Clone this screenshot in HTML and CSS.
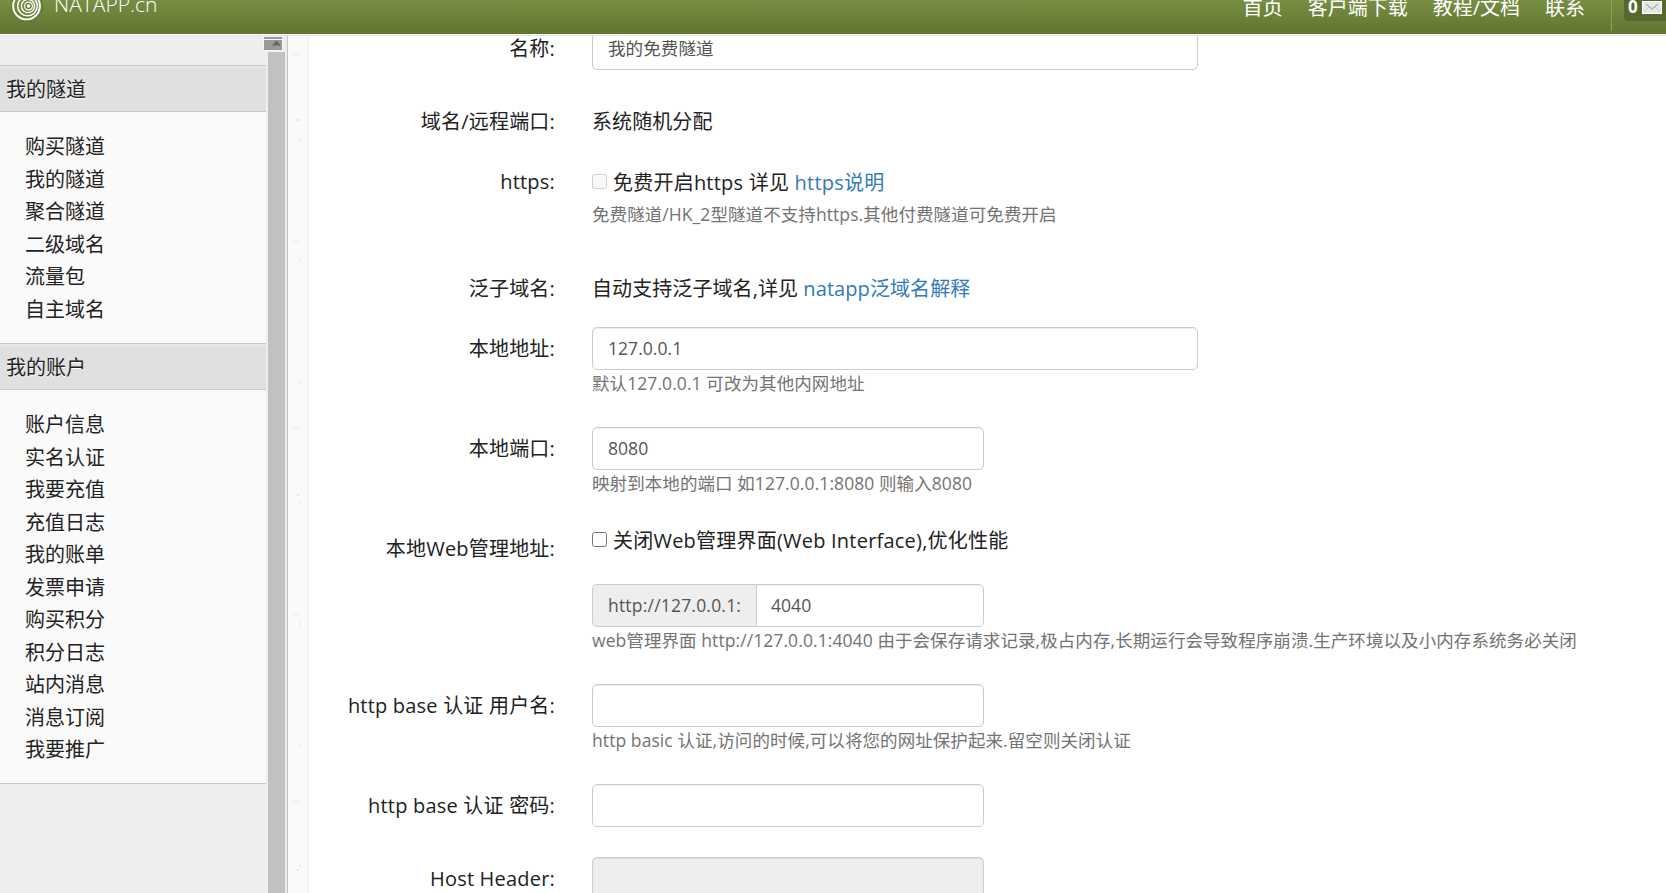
FILE: index.html
```
<!DOCTYPE html>
<html lang="zh-CN">
<head>
  <meta charset="UTF-8">
  <meta name="viewport" content="width=device-width, initial-scale=1">
  <title>NATAPP.cn</title>
  <link rel="stylesheet" href="styles.css">
</head>
<body>

  <header class="navbar">
    <div class="brand">
      <svg class="logo" width="34" height="34" viewBox="0 0 34 34" fill="none" stroke="#fff">
        <circle cx="17" cy="17" r="15.500" stroke="#5f7336" stroke-width="1"/>
        <circle cx="16.500" cy="17" r="13.400" stroke-width="1.900"/>
        <circle cx="17.500" cy="17" r="9.800" stroke-width="1.500"/>
        <circle cx="18" cy="17" r="6.600" stroke-width="1.400"/>
        <circle cx="18.500" cy="17" r="3.900" stroke-width="1.200"/>
        <circle cx="18.500" cy="17" r="1.700" fill="#fff" stroke="none"/>
      </svg>
      <span>NATAPP.cn</span>
    </div>
    <nav class="menu">
      <a href="#">首页</a>
      <a href="#">客户端下载</a>
      <a href="#">教程/文档</a>
      <a href="#">联系</a>
    </nav>
    <div class="messages">
      <div class="badge">
        <b>0</b>
        <svg width="20" height="13" viewBox="0 0 20 13">
          <rect x="0.5" y="0.5" width="19" height="12" fill="#e8e8e8" stroke="#fff"/>
          <path d="M2 11l5-5M18 11l-5-5" stroke="#d0d0d0" fill="none"/>
          <path d="M4 3l6 5 6-5" stroke="#b5b5b5" stroke-width="1.4" fill="none"/>
        </svg>
      </div>
    </div>
  </header>

  <div class="page">
    <aside class="sidebar">
      <div class="side-menu">
        <h3>我的隧道</h3>
        <ul>
          <li>购买隧道</li>
          <li>我的隧道</li>
          <li>聚合隧道</li>
          <li>二级域名</li>
          <li>流量包</li>
          <li>自主域名</li>
        </ul>
        <h3>我的账户</h3>
        <ul>
          <li>账户信息</li>
          <li>实名认证</li>
          <li>我要充值</li>
          <li>充值日志</li>
          <li>我的账单</li>
          <li>发票申请</li>
          <li>购买积分</li>
          <li>积分日志</li>
          <li>站内消息</li>
          <li>消息订阅</li>
          <li>我要推广</li>
        </ul>
      </div>
      <div class="scrollbar">
        <svg class="collapse" width="20" height="15" viewBox="0 0 20 15">
          <path d="M0 0h20v15H0z" fill="#f6f6f6"/>
          <path d="M1 1h18v2H1zM1 4h18v10H1z" fill="#999"/>
          <path d="M9 9.500l4.500-5 4.500 5z" fill="#666"/>
        </svg>
        <div class="thumb"></div>
      </div>
    </aside>

    <main class="content">
      <form>
        <div class="row">
          <label>名称:</label>
          <div class="field"><input class="control wide" type="text" value="我的免费隧道"></div>
        </div>
        <div class="row row-domain">
          <label>域名/远程端口:</label>
          <div class="field"><p class="static">系统随机分配</p></div>
        </div>
        <div class="row row-https">
          <label>https:</label>
          <div class="field">
            <div class="check"><input type="checkbox" disabled><span>免费开启https 详见 <a href="#">https说明</a></span></div>
            <p class="help">免费隧道/HK_2型隧道不支持https.其他付费隧道可免费开启</p>
          </div>
        </div>
        <div class="row row-sub">
          <label>泛子域名:</label>
          <div class="field"><p class="static">自动支持泛子域名,详见 <a href="#">natapp泛域名解释</a></p></div>
        </div>
        <div class="row">
          <label>本地地址:</label>
          <div class="field">
            <input class="control wide" type="text" value="127.0.0.1">
            <p class="help">默认127.0.0.1 可改为其他内网地址</p>
          </div>
        </div>
        <div class="row">
          <label>本地端口:</label>
          <div class="field">
            <input class="control" type="text" value="8080">
            <p class="help">映射到本地的端口 如127.0.0.1:8080 则输入8080</p>
          </div>
        </div>
        <div class="row">
          <label>本地Web管理地址:</label>
          <div class="field">
            <div class="check check-web"><input type="checkbox"><span>关闭Web管理界面(Web Interface),优化性能</span></div>
            <div class="input-group">
              <span class="addon">http://127.0.0.1:</span>
              <input class="control" type="text" value="4040">
            </div>
            <p class="help">web管理界面 http://127.0.0.1:4040 由于会保存请求记录,极占内存,长期运行会导致程序崩溃.生产环境以及小内存系统务必关闭</p>
          </div>
        </div>
        <div class="row">
          <label>http base 认证 用户名:</label>
          <div class="field">
            <input class="control" type="text">
            <p class="help">http basic 认证,访问的时候,可以将您的网址保护起来.留空则关闭认证</p>
          </div>
        </div>
        <div class="row">
          <label>http base 认证 密码:</label>
          <div class="field"><input class="control" type="text"></div>
        </div>
        <div class="row">
          <label>Host Header:</label>
          <div class="field"><input class="control" type="text" disabled></div>
        </div>
      </form>
    </main>
  </div>

</body>
</html>
```
FILE: styles.css
```
* {
  box-sizing: border-box;
}
body {
  margin: 0;
  height: 893px;
  overflow: hidden;
  display: flex;
  flex-direction: column;
  font-family: "Open Sans", "Noto Sans CJK SC", sans-serif;
  font-size: 20px;
  line-height: 25px;
  color: #222;
  background: #fff;
}
a {
  color: #337ab7;
  text-decoration: none;
}
p {
  margin: 0;
}
.navbar {
  display: flex;
  flex: none;
  height: 36px;
  background: linear-gradient(#778e43, #617430 34px, #fff 34px, #fff 35px, #e3e3e8 35px);
  color: #fff;
}
.brand {
  display: flex;
  flex: 1;
  padding-left: 10px;
}
.brand span {
  margin: -8px 0 0 10px;
  font-size: 21px;
  font-weight: 300;
}
.logo {
  margin-top: -11px;
}
.menu {
  display: flex;
  gap: 25px;
  padding-right: 26px;
  margin-top: -5px;
}
.menu a {
  color: #fff;
}
.messages {
  width: 55px;
  height: 31px;
  border-left: 1px solid #8ba352;
  padding-left: 12px;
}
.badge {
  display: flex;
  gap: 4px;
  height: 21px;
  padding-left: 4px;
  background: #56682d;
  border-radius: 0 0 0 4px;
  font-size: 17px;
  line-height: 13px;
}
.badge svg {
  flex: none;
  margin-top: 1px;
}
.page {
  display: flex;
  flex: 1;
  min-height: 0;
  background: #fff;
}
.sidebar {
  display: flex;
  flex: none;
  width: 288px;
  background: #eee;
  border-right: 1px solid #c4c4c4;
}
.side-menu {
  width: 266px;
  padding-top: 29px;
}
.side-menu h3 {
  margin: 0;
  height: 47px;
  padding-left: 6px;
  border: 1px solid #c8c8c8;
  border-width: 1px 0;
  background: #e0e0e0;
  box-shadow: inset 0 2px 1px #e8e8e8;
  font-size: 20px;
  font-weight: normal;
  line-height: 47px;
  text-shadow: 0 1px 0 #fff;
}
.side-menu ul {
  margin: 0;
  padding: 18px 0 18px 25px;
  list-style: none;
  background: #fafafa;
}
.side-menu ul:last-child {
  padding-bottom: 17px;
  border-bottom: 1px solid #c8c8c8;
}
.side-menu li {
  height: 32.5px;
  line-height: 33px;
}
.scrollbar {
  position: relative;
  width: 21px;
  padding: 16px 0 0 2px;
}
.collapse {
  position: absolute;
  top: 0;
  left: -3px;
}
.thumb {
  width: 17px;
  height: 100%;
  background: #c1c1c1;
}
.content {
  flex: 1;
  min-width: 0;
  border-left: 20px solid #fbfaf8;
  overflow: hidden;
}
/* paper grain strip between the sidebar and the form */
.content {
  border-left: 0;
  padding-left: 21px;
  background:
    linear-gradient(#eee, #eee) 20px 0 / 1px 100% no-repeat,
    linear-gradient(#fff, #fff) 21px 0 / 100% 100% no-repeat,
    radial-gradient(ellipse 2px 1px at 10px 84px, #ccc, transparent) 0 0 / 20px 375px,
    radial-gradient(ellipse 6px 2px at 8px 18px, #f0efec, transparent) 0 0 / 20px 187px,
    radial-gradient(ellipse 1px 3px at 12px 104px, #e6e5e2, transparent) 0 0 / 20px 121px,
    #fbfaf8;
}
form {
  margin-top: -9px;
}
.row {
  display: flex;
  margin-bottom: 30px;
}
.row label {
  width: 246px;
  padding-top: 9px;
  margin-right: 37px;
  text-align: right;
  white-space: nowrap;
  letter-spacing: 0.2px;
}
.field {
  white-space: nowrap;
}
.row-domain {
  height: 31px;
}
.row-https {
  height: 76px;
}
.row-https label {
  padding-top: 8px;
}
.row-sub {
  height: 30px;
}
.static {
  padding-top: 9px;
  letter-spacing: 0.08px;
}
.control {
  display: block;
  width: 392px;
  height: 43px;
  padding: 0 15px 2px;
  border: 1px solid #ccc;
  border-radius: 5px;
  background: #fff;
  box-shadow: inset 0 1px 1px rgba(0, 0, 0, 0.075);
  font: inherit;
  font-size: 17.6px;
  color: #555;
  outline: none;
}
.control:disabled {
  background: #eee;
}
.wide {
  width: 606px;
}
.help {
  height: 27px;
  line-height: 27px;
  font-size: 17.5px;
  letter-spacing: 0.08px;
  color: #737373;
}
.check {
  display: flex;
  height: 40px;
  padding-top: 9px;
  letter-spacing: 0.22px;
}
.check input {
  flex: none;
  width: 15px;
  height: 15px;
  margin: 4px 6px 0 0;
}
.check-web {
  height: 57px;
  padding-top: 1px;
}
.input-group {
  display: flex;
  width: 392px;
}
.input-group .control {
  flex: 1;
  min-width: 0;
  padding-left: 14px;
  border-radius: 0 5px 5px 0;
}
.addon {
  width: 164px;
  padding: 0 0 0 15px;
  border: 1px solid #ccc;
  border-right: 0;
  border-radius: 5px 0 0 5px;
  background: #eee;
  font-size: 17.5px;
  line-height: 40px;
  letter-spacing: 0.2px;
  color: #555;
}
```
